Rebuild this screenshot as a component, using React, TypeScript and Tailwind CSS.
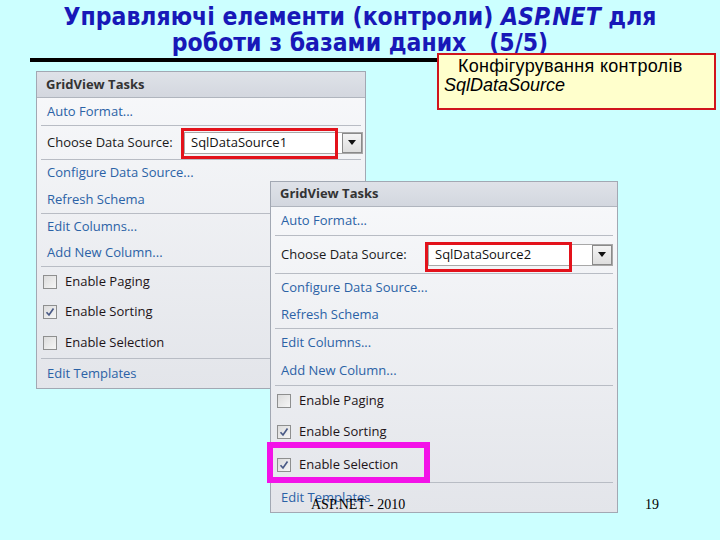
import React from "react";

const ui = "font-['Open_Sans','Noto_Sans',sans-serif]";

function Checkbox({ checked }: { checked: boolean }) {
  return (
    <span className="flex h-[14px] w-[14px] shrink-0 items-center justify-center border border-[#8e8f8f] bg-gradient-to-br from-[#dcdcdc] to-[#f6f6f6]">
      {checked && (
        <svg width="10" height="10" viewBox="0 0 10 10">
          <path d="M1.5 5.2 L4 8 L8.5 1.5" fill="none" stroke="#4a5a86" strokeWidth="1.7" />
        </svg>
      )}
    </span>
  );
}

function DropButton() {
  return (
    <span className="flex h-[20px] w-[20px] shrink-0 items-center justify-center border border-[#8a8a8a] bg-gradient-to-b from-[#f4f4f4] to-[#dedede]">
      <svg width="8" height="5" viewBox="0 0 8 5">
        <path d="M0 0 H8 L4 5 Z" fill="#111" />
      </svg>
    </span>
  );
}

function Link({ text, h }: { text: string; h: string }) {
  return (
    <div className={`flex items-center pl-[10px] text-[#2b62a6] ${h}`}>{text}</div>
  );
}

function Sep() {
  return <div className="mx-[4px] h-px shrink-0 bg-[#b8bcc4]" />;
}

function CheckRow({ text, checked, h }: { text: string; checked: boolean; h: string }) {
  return (
    <div className={`flex items-center gap-[8px] pl-[6px] text-[#1e1418] ${h}`}>
      <Checkbox checked={checked} />
      <span>{text}</span>
    </div>
  );
}

// row heights differ a little between the two screenshots of the panel
const first = {
  header: "h-[26px]",
  auto: "h-[27px]",
  choose: "h-[33px]",
  cfg: "h-[26px]",
  refresh: "h-[27px]",
  cols: "h-[26px]",
  add: "h-[26px]",
  paging: "h-[30px]",
  sorting: "h-[30px]",
  selection: "h-[31px]",
  templates: "h-[29px]",
  red: "top-[-5px] h-[31px]",
};

const second = {
  header: "h-[25px]",
  auto: "h-[28px]",
  choose: "h-[37px]",
  cfg: "h-[27px]",
  refresh: "h-[27px]",
  cols: "h-[28px]",
  add: "h-[28px]",
  paging: "h-[30px]",
  sorting: "h-[32px]",
  selection: "h-[34px]",
  templates: "h-[29px]",
  red: "top-[-3px] h-[30px]",
};

function Panel({
  source,
  labelW,
  comboW,
  redW,
  rows,
  highlight,
}: {
  source: string;
  labelW: string;
  comboW: string;
  redW: string;
  rows: typeof first;
  highlight: boolean;
}) {
  return (
    <div
      className={`flex flex-col border border-[#a2a8b3] bg-gradient-to-b from-[#f8f9fb] to-[#e3e5ea] text-[13px] ${ui}`}
    >
      <div
        className={`flex items-center border-b border-[#b0b5be] bg-gradient-to-b from-[#dfe2e8] to-[#d3d7df] pl-[9px] font-bold text-[#333] ${rows.header}`}
      >
        GridView Tasks
      </div>
      <Link text="Auto Format..." h={rows.auto} />
      <Sep />
      <div className={`flex items-center pl-[10px] text-[#1a1a1a] ${rows.choose}`}>
        <span className={labelW}>Choose Data Source:</span>
        <div className={`relative flex h-[22px] items-center border border-[#a8a8a8] bg-white ${comboW}`}>
          <span className="flex-1 pl-[6px] text-[#111]">{source}</span>
          <DropButton />
          <div className={`absolute left-[-4px] border-[3px] border-[#e3121b] ${rows.red} ${redW}`} />
        </div>
      </div>
      <Sep />
      <Link text="Configure Data Source..." h={rows.cfg} />
      <Link text="Refresh Schema" h={rows.refresh} />
      <Sep />
      <Link text="Edit Columns..." h={rows.cols} />
      <Link text="Add New Column..." h={rows.add} />
      <Sep />
      <CheckRow text="Enable Paging" checked={false} h={rows.paging} />
      <CheckRow text="Enable Sorting" checked={true} h={rows.sorting} />
      {highlight ? (
        <div className="relative">
          <CheckRow text="Enable Selection" checked={true} h={rows.selection} />
          <div className="absolute top-[-6px] left-[-4px] h-[41px] w-[163px] border-[6px] border-[#f312e8]" />
        </div>
      ) : (
        <CheckRow text="Enable Selection" checked={false} h={rows.selection} />
      )}
      <Sep />
      <Link text="Edit Templates" h={rows.templates} />
    </div>
  );
}

export default function App() {
  return (
    <div className="relative h-[540px] w-[720px] overflow-hidden bg-[#ccffff]">
      <div className="flex flex-col items-center pt-[4px] font-['Liberation_Sans_Narrow','DejaVu_Sans_Condensed','Liberation_Sans',sans-serif] text-[24.5px] leading-[26px] font-bold text-[#1818b8]">
        <div>
          Управляючі елементи (контроли) <i>ASP.NET</i> для
        </div>
        <div className="whitespace-pre">роботи з базами даних   (5/5)</div>
      </div>
      <div className="mt-[2px] ml-[30px] h-[4px] w-[410px] bg-black" />

      <div className="mt-[9px] ml-[36px] w-[330px]">
        <Panel
          source="SqlDataSource1"
          labelW="w-[137px]"
          comboW="w-[179px]"
          redW="w-[157px]"
          rows={first}
          highlight={false}
        />
      </div>

      <div className="absolute top-[181px] left-[270px] w-[348px]">
        <Panel
          source="SqlDataSource2"
          labelW="w-[147px]"
          comboW="w-[185px]"
          redW="w-[147px]"
          rows={second}
          highlight={true}
        />
      </div>

      <div className="absolute top-[53px] left-[437px] h-[57px] w-[279px] border-2 border-[#d0141c] bg-[#ffffcc] pl-[5px] pt-[2px] font-['Liberation_Sans',Arial,sans-serif] text-[18px] leading-[19px] text-black">
        <div className="pl-[14px] tracking-[0.3px]">Конфігурування контролів</div>
        <div className="italic">SqlDataSource</div>
      </div>

      <div className="absolute top-[494px] left-[311px] font-['Liberation_Serif',serif] text-[14px] text-black">
        ASP.NET - 2010
      </div>
      <div className="absolute top-[494px] left-[645px] font-['Liberation_Serif',serif] text-[14px] text-black">
        19
      </div>
    </div>
  );
}
